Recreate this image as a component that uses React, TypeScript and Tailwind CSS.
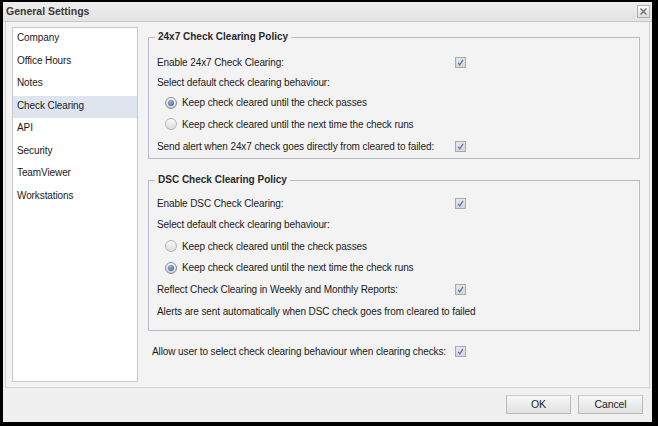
import React from "react";

const Check = () => (
  <div className="w-[11px] h-[11px] border border-[#a9a9a9] bg-gradient-to-b from-[#e6e6e6] to-[#d6d6d6] flex items-center justify-center">
    <svg width="9" height="9" viewBox="0 0 9 9">
      <path d="M2.2 4.8 L3.8 6.8 L7 1.8" fill="none" stroke="#5a78b8" strokeWidth="1.3" />
    </svg>
  </div>
);

const Radio = ({ on }: { on?: boolean }) => (
  <div
    className={
      "w-[12px] h-[12px] rounded-full border flex items-center justify-center " +
      (on
        ? "border-[#8c8c8c] bg-gradient-to-b from-[#f4f4f4] to-[#cfcfcf]"
        : "border-[#b4b4b4] bg-gradient-to-b from-[#fafafa] to-[#dadada]")
    }
  >
    {on && <div className="w-[6px] h-[6px] rounded-full bg-[radial-gradient(circle_at_40%_35%,#8fb3dc,#2d5f97)]" />}
  </div>
);

const Label = ({ text, h }: { text: string; h: string }) => (
  <div className={"flex items-center " + h}>{text}</div>
);

const CheckRow = ({ text, h, w }: { text: string; h: string; w?: string }) => (
  <div className={"flex items-center " + h}>
    <div className={w ?? "w-[298px]"}>{text}</div>
    <Check />
  </div>
);

const RadioRow = ({ text, h, on }: { text: string; h: string; on?: boolean }) => (
  <div className={"flex items-center pl-[8px] gap-[5px] " + h}>
    <Radio on={on} />
    <span>{text}</span>
  </div>
);

export default function App() {
  const items = ["Company", "Office Hours", "Notes", "Check Clearing", "API", "Security", "TeamViewer", "Workstations"];
  return (
    <div className="w-[658px] h-[426px] bg-black pt-[2px] pl-[3px] pr-[6px] pb-[4px] font-['Liberation_Sans',Arial,sans-serif] text-[10px] tracking-[-0.1px] text-[#1a1a1a]">
      <div className="flex h-full flex-col bg-[#f0f0f0]">
        {/* title bar */}
        <div className="flex h-[20px] items-center justify-between border-b border-[#c6c6c6] bg-gradient-to-b from-[#eeeeee] to-[#e3e3e3] pl-[3px] pr-[2px]">
          <span className="text-[10.5px] font-bold tracking-normal text-[#3a3a3a]">General Settings</span>
          <div className="flex h-[13px] w-[13px] items-center justify-center border border-[#b0b0b0] bg-gradient-to-b from-[#fafafa] to-[#dedede]">
            <svg width="9" height="9" viewBox="0 0 9 9">
              <path d="M1.5 1.5 L7.5 7.5 M7.5 1.5 L1.5 7.5" stroke="#7a7a7a" strokeWidth="1.6" />
            </svg>
          </div>
        </div>

        {/* body */}
        <div className="mx-[2px] flex flex-1 border-x border-b border-[#d2d2d2] bg-[#f3f3f3] pl-[6px] pr-[9px] pt-[5px] pb-[5px]">
          <div className="w-[126px] border border-[#cacaca] bg-white">
            {items.map((it) => (
              <div
                key={it}
                className={
                  "h-[22.5px] pl-[4px] pt-[2px] leading-[15px] " + (it === "Check Clearing" ? "bg-[#dfe5ef]" : "")
                }
              >
                {it}
              </div>
            ))}
          </div>

          <div className="ml-[10px] flex flex-1 flex-col pt-[3px]">
            <fieldset className="border border-[#b7bac8] pl-[8px] pr-[8px] pt-[8px] pb-[1px]">
              <legend className="ml-[-2px] px-[3px] text-[10px] font-bold leading-[14px] tracking-normal text-[#2a2a2a]">
                24x7 Check Clearing Policy
              </legend>
              <CheckRow text="Enable 24x7 Check Clearing:" h="h-[21px]" />
              <Label text="Select default check clearing behaviour:" h="h-[19px]" />
              <RadioRow text="Keep check cleared until the check passes" h="h-[21px]" on />
              <RadioRow text="Keep check cleared until the next time the check runs" h="h-[22px]" />
              <CheckRow text="Send alert when 24x7 check goes directly from cleared to failed:" h="h-[22px]" />
            </fieldset>

            <fieldset className="mt-[14px] border border-[#b7bac8] pl-[8px] pr-[8px] pt-[5px] pb-[8px]">
              <legend className="ml-[-2px] px-[3px] text-[10px] font-bold leading-[14px] tracking-normal text-[#2a2a2a]">
                DSC Check Clearing Policy
              </legend>
              <CheckRow text="Enable DSC Check Clearing:" h="h-[22px]" />
              <Label text="Select default check clearing behaviour:" h="h-[21px]" />
              <RadioRow text="Keep check cleared until the check passes" h="h-[22px]" />
              <RadioRow text="Keep check cleared until the next time the check runs" h="h-[21px]" on />
              <CheckRow text="Reflect Check Clearing in Weekly and Monthly Reports:" h="h-[22px]" />
              <Label text="Alerts are sent automatically when DSC check goes from cleared to failed" h="h-[22px]" />
            </fieldset>

            <div className="mt-[10px] pl-[4px]">
              <CheckRow text="Allow user to select check clearing behaviour when clearing checks:" h="h-[21px]" w="w-[303px]" />
            </div>
          </div>
        </div>

        {/* footer */}
        <div className="flex h-[34px] justify-end gap-[7px] pt-[7px] pr-[9px]">
          <button className="h-[19px] w-[65px] border border-[#b9b9b9] border-t-[#cfcfcf] bg-gradient-to-b from-[#f7f7f7] to-[#e2e2e2] text-[10.5px] text-[#1e1e1e]">
            OK
          </button>
          <button className="h-[19px] w-[65px] border border-[#b9b9b9] border-t-[#cfcfcf] bg-gradient-to-b from-[#f7f7f7] to-[#e2e2e2] text-[10.5px] text-[#1e1e1e]">
            Cancel
          </button>
        </div>
      </div>
    </div>
  );
}
